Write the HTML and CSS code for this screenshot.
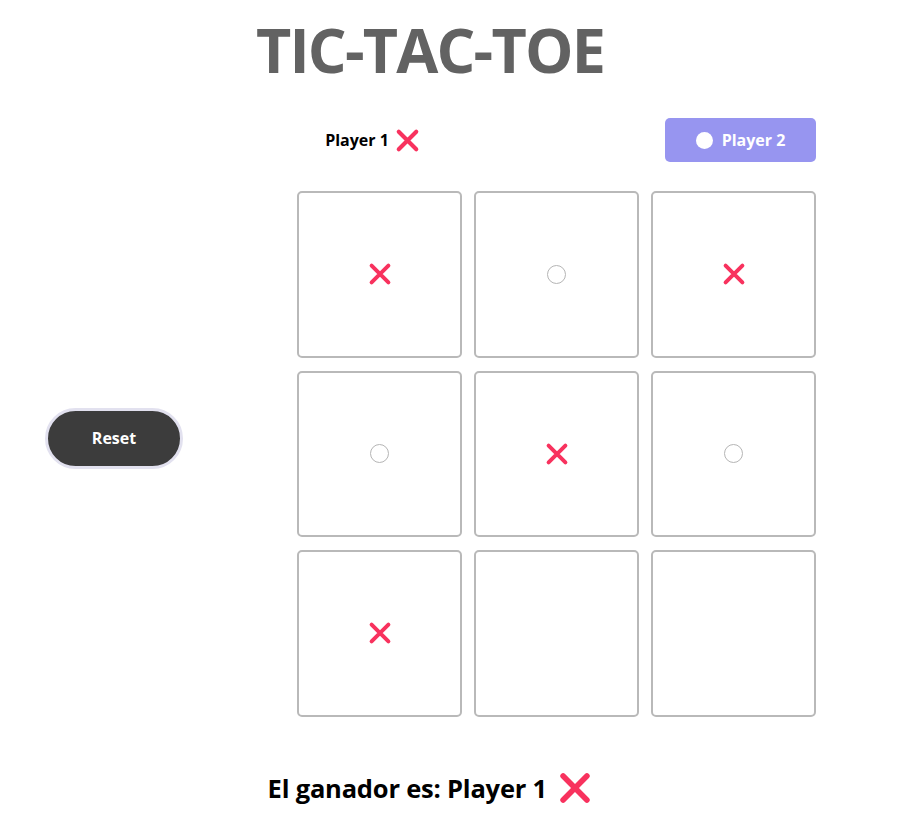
FILE: index.html
```html
<!DOCTYPE html>
<html lang="es">
<head>
<meta charset="utf-8">
<title>Tic-Tac-Toe</title>
<link rel="stylesheet" href="styles.css">
</head>
<body>
<main class="game">
  <h1 class="title">TIC-TAC-TOE</h1>
  <div class="layout">
    <div class="side">
      <button class="reset" type="button">Reset</button>
    </div>
    <div class="play">
      <div class="turns">
        <div class="turn">Player 1
          <svg class="icon-x small" viewBox="0 0 20 20"><path d="M3 3L17 17M17 3L3 17"/></svg>
        </div>
        <div class="turn active">
          <span class="dot"></span>Player 2
        </div>
      </div>
      <div class="board">
        <div class="cell"><svg class="icon-x" viewBox="0 0 20 20"><path d="M3 3L17 17M17 3L3 17"/></svg></div>
        <div class="cell"><span class="ring"></span></div>
        <div class="cell"><svg class="icon-x" viewBox="0 0 20 20"><path d="M3 3L17 17M17 3L3 17"/></svg></div>
        <div class="cell"><span class="ring"></span></div>
        <div class="cell"><svg class="icon-x" viewBox="0 0 20 20"><path d="M3 3L17 17M17 3L3 17"/></svg></div>
        <div class="cell"><span class="ring"></span></div>
        <div class="cell"><svg class="icon-x" viewBox="0 0 20 20"><path d="M3 3L17 17M17 3L3 17"/></svg></div>
        <div class="cell"></div>
        <div class="cell"></div>
      </div>
    </div>
  </div>
  <p class="winner">El ganador es: Player 1
    <svg class="icon-x big" viewBox="0 0 20 20"><path d="M3 3L17 17M17 3L3 17"/></svg>
  </p>
</main>
</body>
</html>
```

FILE: styles.css
```css
* { box-sizing: border-box; }

body {
  margin: 0;
  background: #ffffff;
  font-family: "Open Sans", "Noto Sans", sans-serif;
  color: #000;
}

.game {
  width: 860px;
}

.title {
  margin: 0;
  padding-top: 14px;
  text-align: center;
  font-size: 61px;
  line-height: 72px;
  font-weight: 700;
  color: #626262;
  letter-spacing: -1.8px;
}

.layout {
  display: flex;
  margin-top: 32px;
}

.side {
  width: 297px;
  padding-left: 45px;
  display: flex;
  align-items: center;
  padding-top: 42px;
}

.reset {
  width: 138px;
  height: 61px;
  border-radius: 31px;
  background: #3c3c3c;
  border: 3px solid #e2e1ef;
  color: #ffffff;
  font-family: inherit;
  font-size: 16px;
  font-weight: 700;
  cursor: pointer;
}

.play {
  width: 519px;
}

.turns {
  display: flex;
  justify-content: space-between;
  height: 44px;
}

.turn {
  width: 151px;
  height: 44px;
  display: flex;
  align-items: center;
  justify-content: center;
  gap: 8px;
  font-size: 16px;
  font-weight: 700;
  border-radius: 5px;
}

.turn.active {
  background: #9795f0;
  color: #ffffff;
  gap: 9px;
}

.dot {
  width: 17px;
  height: 17px;
  border-radius: 50%;
  background: #ffffff;
}

.board {
  margin-top: 29px;
  display: grid;
  grid-template-columns: repeat(3, 165px);
  grid-auto-rows: 166.5px;
  gap: 13px 12px;
}

.cell {
  border: 2px solid #b9b9b9;
  border-radius: 5px;
  display: flex;
  align-items: center;
  justify-content: center;
}

.icon-x {
  width: 24px;
  height: 24px;
  fill: none;
  stroke: #f8325e;
  stroke-width: 3.3;
  stroke-linecap: round;
}

.icon-x.small {
  width: 25px;
  height: 25px;
  margin-left: -2px;
}

.icon-x.big {
  width: 34px;
  height: 34px;
  vertical-align: -7px;
  margin-left: 5px;
}

.ring {
  width: 19px;
  height: 19px;
  border: 1px solid #b5b5b5;
  border-radius: 50%;
}

.winner {
  margin: 54px 0 0;
  text-align: center;
  font-size: 25.5px;
  font-weight: 700;
  letter-spacing: -0.2px;
}
```
